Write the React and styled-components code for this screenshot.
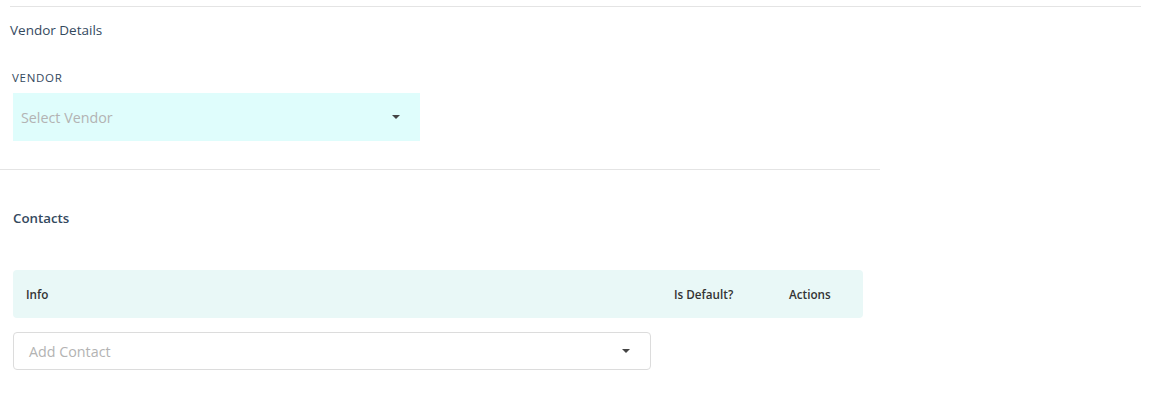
import React from 'react';
import styled, { createGlobalStyle } from 'styled-components';

const GlobalStyle = createGlobalStyle`
  body {
    margin: 0;
    background: #fff;
    font-family: "Open Sans", "Liberation Sans", sans-serif;
    color: #34495e;
  }
`;

function Caret() {
  return (
    <CaretIcon width="8" height="4" viewBox="0 0 8 4">
      <path d="M0 0 H8 L4 4 Z" fill="#444" />
    </CaretIcon>
  );
}

function App() {
  return (
    <Page>
      <GlobalStyle />
      <VendorSection>
        <SectionTitle>Vendor Details</SectionTitle>
        <Field>
          <FieldLabel>VENDOR</FieldLabel>
          <FilledSelect>
            <Placeholder>Select Vendor</Placeholder>
            <Caret />
          </FilledSelect>
        </Field>
      </VendorSection>
      <Divider />
      <ContactsSection>
        <ContactsTitle>Contacts</ContactsTitle>
        <TableHead>
          <HeadCell>Info</HeadCell>
          <HeadCell>Is Default?</HeadCell>
          <HeadCell>Actions</HeadCell>
        </TableHead>
        <OutlineSelect>
          <Placeholder>Add Contact</Placeholder>
          <Caret />
        </OutlineSelect>
      </ContactsSection>
    </Page>
  );
}

const Page = styled.div`
  padding-top: 6px;
  width: 1151px;
`;

const VendorSection = styled.section`
  margin-left: 10px;
  width: 1131px;
  border-top: 1px solid #e4e4e4;
  padding-bottom: 28px;
`;

const SectionTitle = styled.h3`
  margin: 0;
  padding-top: 14px;
  font-size: 13.5px;
  line-height: 18px;
  font-weight: 400;
  color: #34495e;
`;

const Field = styled.div`
  margin: 32px 0 0 3px;
  width: 407px;
`;

const FieldLabel = styled.div`
  font-size: 11.5px;
  line-height: 14px;
  font-weight: 400;
  letter-spacing: 0.7px;
  color: #34495e;
  margin-bottom: 8px;
  margin-left: -1px;
`;

const FilledSelect = styled.div`
  height: 48px;
  background: #dffdfc;
  display: flex;
  align-items: center;
  justify-content: space-between;
  padding: 0 20px 0 8px;
  box-sizing: border-box;
`;

const Placeholder = styled.span`
  font-size: 14.3px;
  color: #b3b3b3;
`;

const CaretIcon = styled.svg`
  display: block;
  flex-shrink: 0;
`;

const Divider = styled.hr`
  margin: 0;
  width: 880px;
  border: none;
  border-top: 1px solid #e4e4e4;
`;

const ContactsSection = styled.section`
  padding: 39px 0 0 13px;
`;

const ContactsTitle = styled.h3`
  margin: 0;
  font-size: 13.3px;
  line-height: 18px;
  font-weight: 600;
  color: #34495e;
`;

const TableHead = styled.div`
  margin-top: 43px;
  width: 850px;
  height: 48px;
  background: #e9f8f7;
  border-radius: 4px;
  display: grid;
  grid-template-columns: 1fr 115px 74px;
  align-items: center;
  padding-left: 13px;
  box-sizing: border-box;
`;

const HeadCell = styled.div`
  font-size: 11.7px;
  font-weight: 600;
  color: #333;
`;

const OutlineSelect = styled.div`
  margin-top: 14px;
  width: 638px;
  height: 38px;
  border: 1px solid #dcdcdc;
  border-radius: 4px;
  display: flex;
  align-items: center;
  justify-content: space-between;
  padding: 0 20px 0 15px;
  box-sizing: border-box;
`;

export default App;
